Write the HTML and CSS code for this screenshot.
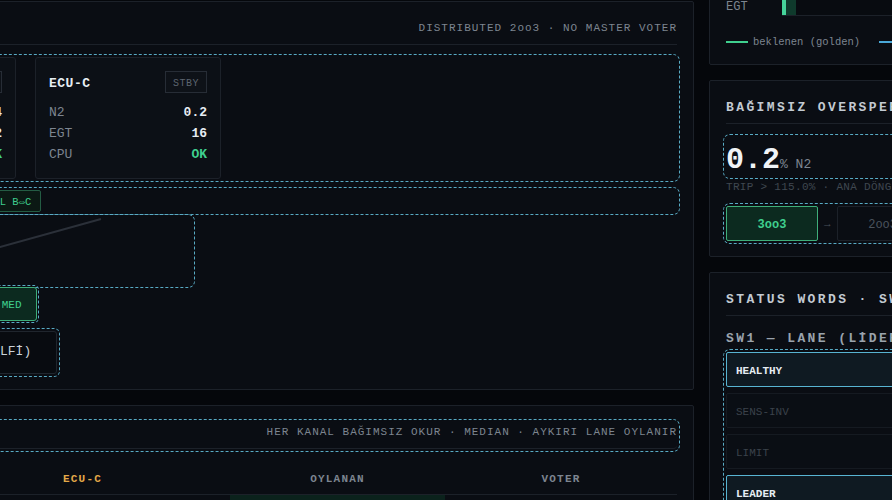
FILE: index.html
```html
<!DOCTYPE html>
<html lang="tr">
<head>
<meta charset="utf-8">
<title>FADEC Lane Panel</title>
<link rel="stylesheet" href="styles.css">
</head>
<body>
<div class="layout">
  <div class="col-main">
    <section class="panel">
      <header class="panel-head">
        <h2 class="panel-title">LANE DURUMU · 3 KANAL</h2>
        <span class="panel-note">DISTRIBUTED 2oo3 · NO MASTER VOTER</span>
      </header>
      <div class="ecu-grid ol">
        <div class="ecu-card">
          <div class="ecu-head"><span class="ecu-name">ECU-A</span><span class="badge">LEAD</span></div>
          <div class="kv"><span class="k">N2</span><span class="v">97.3</span></div>
          <div class="kv"><span class="k">EGT</span><span class="v">611</span></div>
          <div class="kv"><span class="k">CPU</span><span class="v ok">OK</span></div>
        </div>
        <div class="ecu-card">
          <div class="ecu-head"><span class="ecu-name">ECU-B</span><span class="badge">SYNC</span></div>
          <div class="kv"><span class="k">N2</span><span class="v">97.4</span></div>
          <div class="kv"><span class="k">EGT</span><span class="v">612</span></div>
          <div class="kv"><span class="k">CPU</span><span class="v ok">OK</span></div>
        </div>
        <div class="ecu-card">
          <div class="ecu-head"><span class="ecu-name">ECU-C</span><span class="badge">STBY</span></div>
          <div class="kv"><span class="k">N2</span><span class="v">0.2</span></div>
          <div class="kv"><span class="k">EGT</span><span class="v">16</span></div>
          <div class="kv"><span class="k">CPU</span><span class="v ok">OK</span></div>
        </div>
      </div>
      <div class="link-row ol">
        <span class="chip">CCDL A⇔B</span>
        <span class="chip">CCDL A⇔C</span>
        <span class="chip">CCDL B⇔C</span>
      </div>
      <div class="chart-box ol">
        <svg viewBox="0 0 567 68" width="567" height="68" aria-hidden="true">
          <polyline points="0,60 150,52 375,30 476,2" fill="none" stroke="#2b3039" stroke-width="2"/>
        </svg>
      </div>
      <div class="vote-chip ol">SEÇİM: MED</div>
      <div class="out-box ol">ÇIKIŞ (SELFİ)</div>
    </section>

    <section class="panel">
      <header class="panel-head ol">
        <h2 class="panel-title">OYLAMA TABLOSU</h2>
        <span class="panel-note">HER KANAL BAĞIMSIZ OKUR · MEDIAN · AYKIRI LANE OYLANIR</span>
      </header>
      <div class="vote-table">
        <div class="th">PARAM</div>
        <div class="th">ECU-A</div>
        <div class="th">ECU-B</div>
        <div class="th own">ECU-C</div>
        <div class="th">OYLANAN</div>
        <div class="th">VOTER</div>
        <div class="td"></div>
        <div class="td"></div>
        <div class="td"></div>
        <div class="td"></div>
        <div class="td voted"></div>
        <div class="td"></div>
      </div>
    </section>
  </div>

  <div class="col-side">
    <section class="panel">
      <div class="bar-row"><span class="bar-label">N1</span><div class="track"><div class="fill" style="width:62%"></div></div></div>
      <div class="bar-row"><span class="bar-label">N2</span><div class="track"><div class="fill" style="width:58%"></div></div></div>
      <div class="bar-row"><span class="bar-label">EGT</span><div class="track"><div class="fill" style="width:14px"></div></div></div>
      <div class="legend">
        <span class="legend-item"><span class="swatch"></span>beklenen (golden)</span>
        <span class="legend-item"><span class="swatch live"></span>ölçülen (canlı)</span>
      </div>
    </section>

    <section class="panel">
      <header class="panel-head">
        <h2 class="panel-title">BAĞIMSIZ OVERSPEED KORUMASI</h2>
      </header>
      <div class="os-value ol"><span class="os-num">0.2</span><span class="os-unit">% N2</span></div>
      <div class="os-trip">TRIP &gt; 115.0% · ANA DÖNGÜDEN BAĞIMSIZ</div>
      <div class="mode-row ol">
        <span class="mode active">3oo3</span>
        <span class="arrow">→</span>
        <span class="mode">2oo3</span>
        <span class="arrow">→</span>
        <span class="mode">1oo3</span>
      </div>
    </section>

    <section class="panel">
      <header class="panel-head">
        <h2 class="panel-title">STATUS WORDS · SW1/SW2</h2>
      </header>
      <h3 class="sub-title">SW1 — LANE (LİDER)</h3>
      <div class="sw-list ol">
        <div class="sw-row on">HEALTHY</div>
        <div class="sw-row">SENS-INV</div>
        <div class="sw-row">LIMIT</div>
        <div class="sw-row on">LEADER</div>
      </div>
    </section>
  </div>
</div>
</body>
</html>
```

FILE: styles.css
```css
* { box-sizing: border-box; margin: 0; padding: 0; }

html, body {
  width: 892px;
  height: 500px;
  overflow: hidden;
  background: #05070b;
}

body {
  font-family: "Liberation Mono", "DejaVu Sans Mono", monospace;
  color: #c9d1d9;
  font-size: 12px;
}

.layout {
  display: grid;
  grid-template-columns: 1086px 400px;
  column-gap: 15px;
  align-items: start;
  margin: 1px 0 0 -392px;
}

.col-main, .col-side {
  display: flex;
  flex-direction: column;
  gap: 15px;
}

.col-side { margin-top: -78px; }

.panel {
  display: flex;
  flex-direction: column;
  background: #0a0d13;
  border: 1px solid #1c2129;
  border-radius: 2px;
  padding: 16px 16px 15px;
}

.panel-head {
  display: flex;
  justify-content: space-between;
  align-items: center;
  height: 27px;
  line-height: 17px;
  padding-top: 2px;
  padding-bottom: 7px;
  border-bottom: 1px solid #1c2129;
}

.panel-title {
  font-size: 13px;
  font-weight: 700;
  letter-spacing: 2.4px;
  color: #c3cad2;
  white-space: nowrap;
}

.panel-note {
  font-size: 11px;
  letter-spacing: 1px;
  color: #7d8590;
  white-space: nowrap;
}

.ol {
  outline: 1px dashed #58aac4;
  outline-offset: 2px;
  border-radius: 4px;
}

/* ECU cards */
.ecu-grid {
  margin-top: 12px;
  height: 122px;
  display: grid;
  grid-template-columns: repeat(3, 186px);
  column-gap: 19px;
}

.ecu-card {
  background: #0c1016;
  border: 1px solid #1c2129;
  border-radius: 3px;
  padding: 13px;
}

.ecu-head {
  display: flex;
  justify-content: space-between;
  align-items: center;
  height: 22px;
  margin-bottom: 9px;
}

.ecu-name {
  font-size: 13px;
  font-weight: 700;
  letter-spacing: .5px;
  color: #e6edf3;
  line-height: 18px;
  padding-top: 4px;
}

.badge {
  height: 22px;
  line-height: 21px;
  padding: 1px 7px 0;
  border: 1px solid #272d36;
  background: #0e1218;
  font-size: 10px;
  letter-spacing: .5px;
  color: #5d6570;
}

.kv {
  display: flex;
  justify-content: space-between;
  height: 21px;
  line-height: 21px;
  font-size: 13px;
}

.kv .k { color: #7d8590; }
.kv .v { color: #e6edf3; font-weight: 700; }
.kv .v.ok { color: #3fcf8e; }

/* links */
.link-row {
  margin-top: 11px;
  height: 22px;
  display: flex;
  gap: 8px;
  padding-left: 189px;
}

.chip {
  height: 22px;
  line-height: 21px;
  padding: 1px 9px 0;
  border: 1px solid #245c44;
  background: #0b1914;
  color: #3fcf8e;
  font-size: 10.5px;
  border-radius: 2px;
  white-space: nowrap;
}

.chart-box {
  margin-top: 5px;
  height: 68px;
  width: 567px;
}

.chart-box svg { display: block; }

.vote-chip {
  align-self: flex-start;
  margin: 2px 0 0 315px;
  width: 97px;
  height: 34px;
  border: 1px solid #3fae7a;
  background: #0c2a1f;
  color: #3fcf8e;
  font-size: 11px;
  display: flex;
  align-items: center;
  justify-content: center;
  border-radius: 3px;
  outline-offset: 1px;
  padding-top: 2px;
  white-space: nowrap;
}

.out-box {
  align-self: flex-start;
  margin: 10px 0 0 279px;
  width: 153px;
  height: 43px;
  border: 1px solid #1f252d;
  background: #080b10;
  color: #c9d1d9;
  font-size: 13px;
  display: flex;
  align-items: center;
  justify-content: center;
  border-radius: 3px;
  padding-bottom: 2px;
  white-space: nowrap;
}

/* table */
.vote-table {
  margin-top: 13px;
  display: grid;
  grid-template-columns: 130px 90px 90px 295px 215px 1fr;
}

.th {
  height: 33px;
  padding-top: 2px;
  border-bottom: 1px solid #1c2129;
  display: flex;
  align-items: center;
  justify-content: center;
  font-size: 11px;
  font-weight: 700;
  letter-spacing: 1.2px;
  color: #7d8590;
}

.th.own { color: #e3a948; }

.td { height: 30px; }
.td.voted { background: #0b221c; }

/* bars */
.bar-row {
  display: flex;
  align-items: center;
  height: 20px;
}

.bar-row + .bar-row { margin-top: 8px; }

.bar-label {
  width: 56px;
  font-size: 12px;
  color: #7d8590;
  padding-top: 2px;
}

.track {
  flex: 1;
  height: 20px;
  border: 1px solid #1c2129;
  border-left: 0;
  background: #080b10;
}

.fill {
  height: 100%;
  background: linear-gradient(90deg, #45d39a 0 4px, #0f3a2c 4px);
}

.legend {
  display: flex;
  align-items: center;
  gap: 19px;
  margin-top: 19px;
  height: 14px;
  font-size: 10.5px;
  color: #7d8590;
  white-space: nowrap;
}

.legend-item {
  display: flex;
  align-items: center;
  gap: 5px;
}

.swatch {
  width: 22px;
  height: 2px;
  background: #3fcf8e;
}

.swatch.live { background: #4aa8d8; }

/* overspeed */
.os-value {
  margin-top: 13px;
  height: 39px;
  padding: 8px 0 0 0;
  display: flex;
  align-items: baseline;
  white-space: nowrap;
}

.os-num {
  font-size: 30px;
  line-height: 30px;
  font-weight: 700;
  color: #f0f3f6;
}

.os-unit {
  font-size: 13px;
  color: #7d8590;
  white-space: pre;
}

.os-trip {
  margin-top: 4px;
  height: 13px;
  line-height: 13px;
  padding-top: 1px;
  font-size: 11px;
  letter-spacing: .3px;
  color: #3f4750;
  white-space: nowrap;
}

.mode-row {
  margin-top: 13px;
  display: flex;
  align-items: center;
  gap: 6px;
}

.mode {
  width: 92px;
  height: 35px;
  flex: none;
  padding-top: 2px;
  border: 1px solid #1c2129;
  border-radius: 2px;
  display: flex;
  align-items: center;
  justify-content: center;
  font-size: 12px;
  color: #4b535d;
}

.mode.active {
  border-color: #3fae7a;
  background: #0c2a1f;
  color: #3fcf8e;
  font-weight: 700;
}

.arrow {
  font-size: 11px;
  color: #4b535d;
}

/* status words */
.sub-title {
  margin-top: 12px;
  height: 17px;
  line-height: 17px;
  padding-top: 2px;
  box-sizing: content-box;
  margin-bottom: -2px;
  font-size: 13px;
  font-weight: 700;
  letter-spacing: 2.4px;
  color: #9aa3ad;
  white-space: nowrap;
}

.sw-list {
  margin-top: 7px;
  display: flex;
  flex-direction: column;
  gap: 6px;
}

.sw-row {
  height: 35px;
  border: 1px solid #151a21;
  background: #0a0e14;
  border-radius: 2px;
  padding: 2px 9px 0;
  display: flex;
  align-items: center;
  font-size: 11px;
  color: #3b424b;
}

.sw-row.on {
  border-color: #58b4d2;
  background: #0f1a22;
  color: #e6edf3;
  font-weight: 700;
}
```
